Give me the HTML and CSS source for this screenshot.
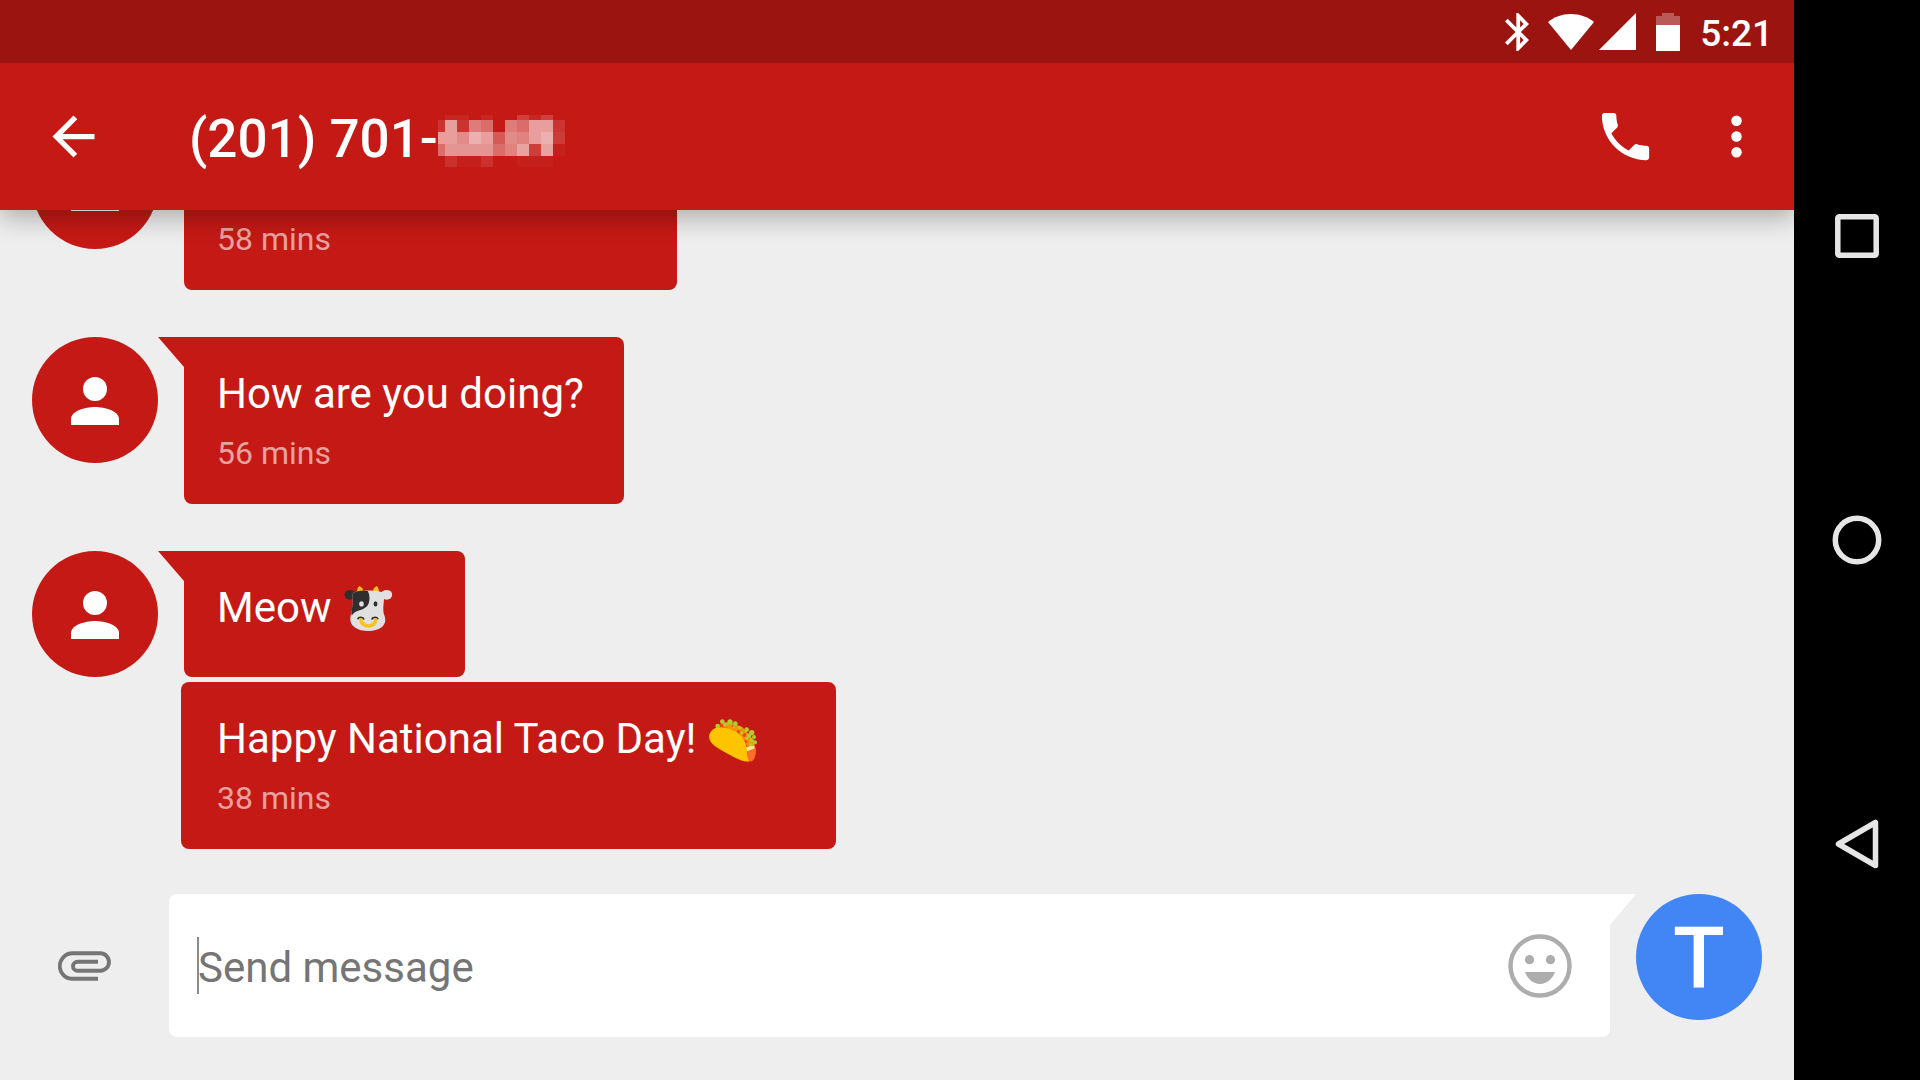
FILE: index.html
```html
<!DOCTYPE html>
<html lang="en">
<head>
<meta charset="utf-8">
<meta name="viewport" content="width=device-width, initial-scale=1">
<title>Messenger</title>
<link rel="stylesheet" href="styles.css">
</head>
<body>
<div class="app">
  <div class="status">
    <svg class="status-bluetooth" width="24" height="38" viewBox="5 2 12.71 20" aria-label="Bluetooth"><path d="M17.71 7.71L12 2h-1v7.59L6.41 5 5 6.41 10.59 12 5 17.59 6.41 19 11 14.41V22h1l5.71-5.71-4.3-4.29 4.3-4.29zM13 5.83l1.88 1.88L13 9.59V5.83zm1.88 10.46L13 18.17v-3.76l1.88 1.88z"/></svg>
    <svg class="status-wifi" width="46" height="36" viewBox="0 0 46 36" aria-label="Wi-Fi"><path d="M23 36L0 8C6 3 14 0 23 0s17 3 23 8z"/></svg>
    <svg class="status-signal" width="37" height="37" viewBox="0 0 37 37" aria-label="Signal"><path d="M37 0v37H0z"/></svg>
    <svg class="status-battery" width="24" height="38" viewBox="0 0 24 38" aria-label="Battery"><path opacity=".3" d="M6 0h12v3h6v9H0V3h6z"/><path d="M0 12h24v26H0z"/></svg>
    <time class="clock">5:21</time>
  </div>

  <header class="toolbar">
    <button class="icon-button" type="button" aria-label="Back">
      <svg class="icon" viewBox="0 0 24 24"><path d="M20 11H7.83l5.59-5.59L12 4l-8 8 8 8 1.41-1.41L7.83 13H20v-2z"/></svg>
    </button>
    <h1 class="title">(201) 701-<svg class="mosaic" width="127" height="52" viewBox="0 0 127 52" shape-rendering="crispEdges" aria-hidden="true">
      <g fill="#fff">
        <path opacity=".06" d="M7 0h24v5H7zM43 0h12v5H43zM79 0h24v5H79zM103 0h12v5h-12z"/>
        <path opacity=".12" d="M79 0h12v5H79zM103 0h12v5h-12zM0 5h7v12H0zM19 5h12v12H19zM115 5h12v12h-12z"/>
        <path opacity=".58" d="M7 5h12v12H7zM91 5h12v12H91zM103 5h12v12h-12z"/>
        <path opacity=".43" d="M31 5h12v12H31zM67 5h12v12H67z"/>
        <path opacity=".36" d="M43 5h12v12H43zM79 5h12v12H79z"/>
        <path opacity=".58" d="M0 17h19v12H0zM43 17h12v12H43zM91 17h12v12H91z"/>
        <path opacity=".5" d="M19 17h12v12H19zM67 17h12v12H67z"/>
        <path opacity=".66" d="M31 17h12v12H31zM103 17h12v12h-12z"/>
        <path opacity=".28" d="M55 17h12v12H55z"/>
        <path opacity=".46" d="M79 17h12v12H79z"/>
        <path opacity=".15" d="M115 17h12v12h-12z"/>
        <path opacity=".36" d="M0 29h7v12H0zM55 29h12v12H55z"/>
        <path opacity=".54" d="M7 29h12v12H7zM19 29h12v12H19zM31 29h24v12H31z"/>
        <path opacity=".46" d="M67 29h12v12H67z"/>
        <path opacity=".6" d="M79 29h12v12H79zM103 29h12v12h-12z"/>
        <path opacity=".17" d="M91 29h12v12H91z"/>
        <path opacity=".1" d="M7 41h12v11H7zM43 41h12v11H43z"/>
        <path opacity=".03" d="M19 41h24v11H19zM79 41h36v11H79zM115 29h12v12h-12z"/>
      </g>
    </svg></h1>
    <div class="actions">
      <button class="icon-button" type="button" aria-label="Call">
        <svg class="icon" viewBox="0 0 24 24"><path d="M6.62 10.79c1.44 2.83 3.76 5.14 6.59 6.59l2.2-2.2c.27-.27.67-.36 1.02-.24 1.12.37 2.33.57 3.57.57.55 0 1 .45 1 1V20c0 .55-.45 1-1 1-9.39 0-17-7.61-17-17 0-.55.45-1 1-1h3.5c.55 0 1 .45 1 1 0 1.25.2 2.45.57 3.57.11.35.03.74-.25 1.02l-2.2 2.2z"/></svg>
      </button>
      <button class="icon-button" type="button" aria-label="More options">
        <svg class="icon" viewBox="0 0 24 24"><circle cx="12" cy="6" r="2"/><circle cx="12" cy="12" r="2"/><circle cx="12" cy="18" r="2"/></svg>
      </button>
    </div>
  </header>

  <main class="thread">
    <article class="group">
      <div class="avatar"><svg class="person" viewBox="0 0 48 48"><circle cx="24" cy="12" r="12"/><path d="M0 48v-6c0-8 14-12 24-12s24 4 24 12v6z"/></svg></div>
      <div class="bubbles">
        <div class="bubble bubble-tail bubble-medium"><p class="text"></p><time class="when">58 mins</time></div>
      </div>
    </article>
    <article class="group">
      <div class="avatar"><svg class="person" viewBox="0 0 48 48"><circle cx="24" cy="12" r="12"/><path d="M0 48v-6c0-8 14-12 24-12s24 4 24 12v6z"/></svg></div>
      <div class="bubbles">
        <div class="bubble bubble-tail"><p class="text">How are you doing?</p><time class="when">56 mins</time></div>
      </div>
    </article>
    <article class="group">
      <div class="avatar"><svg class="person" viewBox="0 0 48 48"><circle cx="24" cy="12" r="12"/><path d="M0 48v-6c0-8 14-12 24-12s24 4 24 12v6z"/></svg></div>
      <div class="bubbles">
        <div class="bubble bubble-tail bubble-emoji"><p class="text">Meow <svg class="emoji" viewBox="72 77 147 138" role="img" aria-label="cow face">
          <path fill="#fcc21b" d="M111 97c-1-9 1-16 6-20 7 3 12 9 13 16zM159 93c1-7 5-13 12-16 5 4 7 11 6 20z"/>
          <ellipse cx="89" cy="104" rx="17" ry="15" fill="#2f2f2f"/>
          <ellipse cx="201" cy="104" rx="17" ry="15" fill="#e0e0e0"/>
          <path fill="#e0e0e0" d="M97 99c14-11 82-11 96 0v18c-1 20-5 35 2 52 10 32-20 46-50 46-33 0-58-15-55-40 1-15 9-30 7-55z"/>
          <path fill="#2f2f2f" d="M97 99c12-9 34-10 46-7 7 10 9 35-3 48-13 13-35 10-46 28-3-14 5-28 3-48z"/>
          <ellipse cx="124" cy="132" rx="7" ry="8" fill="#e0e0e0"/>
          <ellipse cx="167" cy="132" rx="6" ry="8" fill="#2f2f2f"/>
          <path fill="none" stroke="#2f2f2f" stroke-width="5" d="M112 179c3-8 17-8 20 1M155 180c3-9 17-9 20-1"/>
          <path fill="none" stroke="#fcc21b" stroke-width="11" d="M123 177c-4 30 48 30 44 0"/>
        </svg></p></div>
        <div class="bubble bubble-emoji bubble-last"><p class="text">Happy National Taco Day! <svg class="emoji" viewBox="60 48 147 135" role="img" aria-label="taco">
          <g fill="#ff8f00"><path d="M88 74l30-12 42 16 38 44-2 20-22-8-40-46z"/></g>
          <g fill="#e64a19"><circle cx="97" cy="75" r="6"/><circle cx="134" cy="76" r="5"/><circle cx="148" cy="92" r="5"/><circle cx="166" cy="102" r="6"/><circle cx="170" cy="122" r="5"/></g>
          <g fill="#b2cc2c"><circle cx="86" cy="75" r="7"/><circle cx="100" cy="62" r="7"/><circle cx="109" cy="70" r="6"/><circle cx="123" cy="63" r="8"/><circle cx="139" cy="68" r="7"/><circle cx="135" cy="78" r="4"/><circle cx="152" cy="80" r="5"/><circle cx="159" cy="96" r="5"/><circle cx="173" cy="86" r="7"/><circle cx="188" cy="95" r="8"/><circle cx="180" cy="104" r="7"/><circle cx="195" cy="108" r="6"/><circle cx="188" cy="118" r="6"/><circle cx="198" cy="124" r="6"/><circle cx="186" cy="131" r="6"/><circle cx="174" cy="112" r="4"/></g>
          <path fill="#ff6d28" d="M174 146c6-7 19-10 26-6 3 15-2 36-12 41h-10z"/>
          <path fill="#ffe79a" d="M170 138c8-3 18-1 27-3l-1 8c-8 1-14 5-22 8z"/>
          <path fill="#ffc400" d="M60 106c3-17 16-27 36-27 34 1 71 23 77 62 2 14 2 32 8 40-14 3-38-7-58-19-26-15-64-31-63-56z"/>
        </svg></p><time class="when">38 mins</time></div>
      </div>
    </article>
  </main>

  <form class="composer">
    <button class="attach" type="button" aria-label="Attach">
      <svg width="54" height="30" viewBox="0 0 54 30"><path fill="none" stroke="#757575" stroke-width="3.9" d="M40 27.8H14.5a12.75 12.75 0 0 1 0-25.5H42.3a8.7 8.7 0 0 1 0 17.4H19.5a4.5 4.5 0 0 1 0-9H40"/></svg>
    </button>
    <div class="field">
      <span class="caret"></span>
      <input class="input" type="text" placeholder="Send message" aria-label="Send message">
      <button class="icon-button" type="button" aria-label="Insert emoji">
        <svg width="64" height="64" viewBox="0 0 64 64" fill="#adadad"><circle cx="32" cy="32" r="29.5" fill="none" stroke="#adadad" stroke-width="4.4"/><circle cx="21.5" cy="25.7" r="4.6"/><circle cx="42.5" cy="25.7" r="4.6"/><path d="M17 38h30c-2.4 7-8.5 12-15 12s-12.6-5-15-12z"/></svg>
      </button>
    </div>
    <div class="avatar avatar-self">T</div>
  </form>
</div>

<nav class="system-nav" aria-label="System">
  <button class="nav-button" type="button" aria-label="Recent apps"><svg width="50" height="50" viewBox="0 0 50 50"><rect x="5.8" y="5.8" width="38.4" height="38.4" rx="1.5"/></svg></button>
  <button class="nav-button" type="button" aria-label="Home"><svg width="50" height="50" viewBox="0 0 50 50"><circle cx="25" cy="25" r="21.7"/></svg></button>
  <button class="nav-button" type="button" aria-label="Back"><svg width="50" height="50" viewBox="0 0 50 50"><path stroke-linejoin="round" d="M43.5 3.5v43L6.5 25z"/></svg></button>
</nav>
</body>
</html>
```
FILE: styles.css
```css
* {
  box-sizing: border-box;
}

body {
  margin: 0;
  height: 100vh;
  display: flex;
  overflow: hidden;
  background: #000;
  font-family: Roboto, "Liberation Sans", sans-serif;
}

button {
  display: flex;
  padding: 0;
  border: 0;
  background: none;
  cursor: pointer;
}

svg {
  flex: none;
}

.app {
  flex: 1;
  min-width: 0;
  display: flex;
  flex-direction: column;
  background: #eee;
}

/* Status bar */
.status {
  position: relative;
  z-index: 2;
  flex: none;
  height: 63px;
  padding-right: 21px;
  display: flex;
  align-items: center;
  justify-content: flex-end;
  background: #9b1410;
  color: #fff;
  fill: #fff;
}

.status-wifi {
  margin-left: 19px;
}

.status-signal {
  margin-left: 5px;
}

.status-battery {
  margin-left: 20px;
}

.clock {
  margin-left: 20px;
  padding-top: 4px;
  font-size: 37px;
  line-height: 44px;
  font-weight: 500;
}

/* Toolbar */
.toolbar {
  flex: none;
  position: relative;
  z-index: 1;
  height: 147px;
  padding: 0 26px 0 42px;
  display: flex;
  align-items: center;
  background: #c51915;
  color: #fff;
  box-shadow: 0 8px 24px rgba(0, 0, 0, .28);
}

.icon {
  width: 63px;
  height: 63px;
  fill: #fff;
}

.title {
  flex: 1;
  margin: 0 0 0 84px;
  padding-top: 4px;
  display: flex;
  align-items: center;
  font-size: 53px;
  line-height: 64px;
  font-weight: 500;
}

.mosaic {
  margin-top: 5px;
}

.actions {
  display: flex;
  gap: 48px;
}

/* Conversation */
.thread {
  flex: 1;
  min-height: 0;
  padding: 0 32px 45px;
  display: flex;
  flex-direction: column;
  justify-content: flex-end;
  gap: 47px;
  overflow: hidden;
}

.group {
  flex: none;
  display: flex;
  align-items: flex-start;
}

.avatar {
  flex: none;
  width: 126px;
  height: 126px;
  padding-top: 2px;
  display: flex;
  align-items: center;
  justify-content: center;
  border-radius: 50%;
  background: #c51915;
}

.person {
  width: 48px;
  height: 48px;
  fill: #fff;
}

.bubbles {
  margin-left: 23px;
  display: flex;
  flex-direction: column;
  align-items: flex-start;
  gap: 5px;
}

.bubble {
  position: relative;
  min-height: 126px;
  padding: 32px 40px 31px 36px;
  border-radius: 8px;
  background: #c51915;
  color: #fff;
}

.bubble-tail {
  margin-left: 3px;
  padding-left: 33px;
  border-top-left-radius: 0;
}

.bubble-tail::before {
  content: "";
  position: absolute;
  top: 0;
  right: 100%;
  width: 26px;
  height: 30px;
  background: #c51915;
  clip-path: polygon(0 0, 100% 0, 100% 100%);
}

.bubble-medium {
  min-width: 493px;
}

.bubble-emoji {
  padding-right: 72px;
}

.bubble-last {
  padding-right: 78px;
}

.text {
  margin: 0;
  min-height: 50px;
  font-size: 42px;
  line-height: 50px;
}

.emoji {
  width: 49px;
  height: 45px;
  margin-left: 2px;
  vertical-align: -9px;
}

.when {
  display: block;
  margin-top: 15px;
  font-size: 32px;
  line-height: 39px;
  color: rgba(255, 255, 255, .6);
}

/* Composer */
.composer {
  flex: none;
  padding: 0 32px 43px 0;
  display: flex;
  align-items: flex-start;
}

.attach {
  width: 169px;
  height: 143px;
  align-items: center;
  justify-content: center;
}

.field {
  position: relative;
  flex: 1;
  height: 143px;
  margin-right: 26px;
  padding: 0 38px 0 28px;
  display: flex;
  align-items: center;
  border-radius: 8px;
  border-top-right-radius: 0;
  background: #fff;
}

.field::after {
  content: "";
  position: absolute;
  top: 0;
  left: 100%;
  width: 26px;
  height: 31px;
  background: #fff;
  clip-path: polygon(0 0, 100% 0, 0 100%);
}

.caret {
  position: absolute;
  left: 28px;
  width: 2px;
  height: 57px;
  background: #8a8a8a;
}

.input {
  flex: 1;
  min-width: 0;
  padding: 4px 0 0 1px;
  border: 0;
  outline: 0;
  background: none;
  font: 42px/50px Roboto, "Liberation Sans", sans-serif;
  color: #212121;
}

.input::placeholder {
  color: #757575;
  opacity: 1;
}

.avatar-self {
  background: #4285f4;
  color: #fff;
  font-size: 85px;
  line-height: 100px;
  font-weight: 500;
}

/* System navigation */
.system-nav {
  position: relative;
  z-index: 2;
  flex: none;
  width: 126px;
  padding: 84px 0;
  display: flex;
  flex-direction: column;
  background: #000;
}

.nav-button {
  flex: 1;
  align-items: center;
  justify-content: center;
  fill: none;
  stroke: #e6e6e6;
  stroke-width: 5.5;
}
```
